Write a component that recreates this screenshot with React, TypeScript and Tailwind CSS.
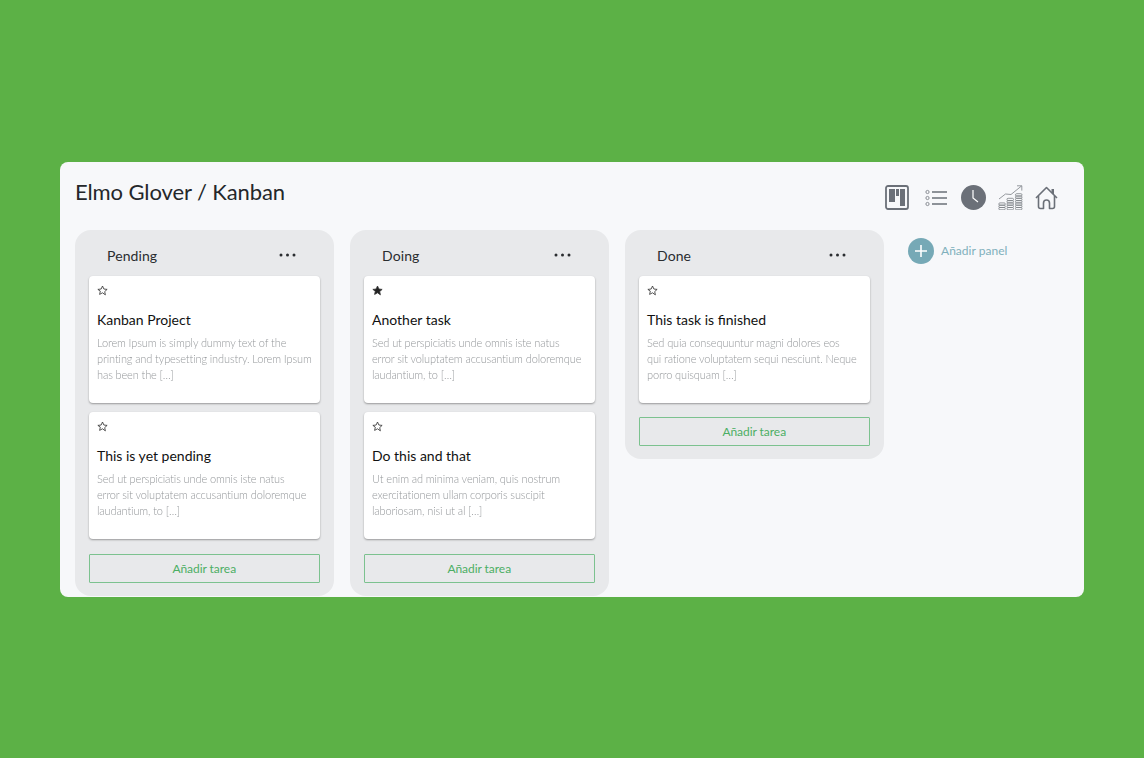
const FONT = "font-['Lato',sans-serif]";

function Star({ filled }: { filled?: boolean }) {
  return (
    <svg width="11" height="11" viewBox="0 0 24 24" fill={filled ? "#222" : "none"} stroke="#333" strokeWidth="1.800" strokeLinejoin="round">
      <path d="M12 2.200l3 6.600 7.100.8-5.300 4.800 1.500 7.100L12 17l-6.300 3.500 1.500-7.100L1.900 9.600l7.100-.8z" />
    </svg>
  );
}

function Card({ title, lines, filled }: { title: string; lines: string[]; filled?: boolean }) {
  return (
    <div className="h-[127px] rounded-[4px] bg-white px-2 pt-[9px] shadow-[0_1px_2px_rgba(0,0,0,0.35)]">
      <div className="h-[12px]"><Star filled={filled} /></div>
      <h3 className="mt-[13px] text-[14px] leading-[20px] text-[#111]">{title}</h3>
      <div className="mt-[5px] text-[11px] font-light leading-[16px] tracking-[-0.12px] text-[#95989b] [will-change:transform]">
        {lines.map((l) => (
          <div key={l} className="whitespace-nowrap">{l}</div>
        ))}
      </div>
    </div>
  );
}

function AddTask() {
  return (
    <button className="flex h-[29px] w-full items-center justify-center rounded-[1px] border border-[#7cc28f] text-[12px] tracking-[-0.05px] text-[#4cae64]">
      Añadir tarea
    </button>
  );
}

function Column({ name, cards }: { name: string; cards: { title: string; lines: string[]; filled?: boolean }[] }) {
  return (
    <section className="w-[259px] self-start rounded-[16px] bg-[#e8e9eb] pb-[13px] pl-[14px] pr-[14.5px]">
      <header className="flex h-[46px] items-center justify-between pb-[1px] pl-[18px] pr-[24px] pt-[5px]">
        <span className="text-[14px] tracking-[0.1px] text-[#2a2d30]">{name}</span>
        <svg width="17" height="4" viewBox="0 0 17 4" fill="#2a2d30">
          <circle cx="2" cy="2" r="1.500" />
          <circle cx="8.500" cy="2" r="1.500" />
          <circle cx="15" cy="2" r="1.500" />
        </svg>
      </header>
      <div className="flex flex-col gap-[9px]">
        {cards.map((c) => (
          <Card key={c.title} {...c} />
        ))}
      </div>
      <div className={cards.length === 1 ? "mt-[14px]" : "mt-[15px]"}><AddTask /></div>
    </section>
  );
}

function Coins({ x, top }: { x: number; top: number }) {
  const ys: number[] = [];
  for (let y = 22.500; y >= top; y -= 2.300) ys.push(y);
  return (
    <g>
      {ys.map((y) => (
        <rect key={y} x={x} y={y} width="6.500" height="2.300" rx="1.100" />
      ))}
    </g>
  );
}

function Icons() {
  return (
    <div className="flex items-center">
      <svg width="24" height="25" viewBox="0 0 24 25">
        <rect x="1" y="1" width="22" height="23" rx="2" fill="none" stroke="#6b7078" strokeWidth="1.800" />
        <rect x="4" y="4" width="6" height="13" fill="#6b7078" />
        <rect x="11" y="4" width="3" height="7" fill="#6b7078" />
        <rect x="15" y="4" width="5" height="17" fill="#6b7078" />
      </svg>
      <svg className="ml-[16px]" width="22" height="18" viewBox="0 0 22 18" fill="none" stroke="#8a8e94">
        <circle cx="2.500" cy="3" r="1.600" />
        <circle cx="2.500" cy="9" r="1.600" />
        <circle cx="2.500" cy="15" r="1.600" />
        <path d="M7 3h15M7 9h15M7 15h15" stroke="#6b7078" strokeWidth="1.300" />
      </svg>
      <svg className="ml-[14px]" width="25" height="25" viewBox="0 0 25 25">
        <circle cx="12.500" cy="12.500" r="12.500" fill="#6b7078" />
        <path d="M12 5v8l5 4" fill="none" stroke="#fff" strokeWidth="1.200" />
      </svg>
      <svg className="ml-[12px]" width="25" height="25" viewBox="0 0 25 25" fill="none" stroke="#7c8187" strokeWidth="0.800">
        <path d="M1 14 L7.500 9 L13 9.500 L23.500 1" />
        <path d="M19 .8h4.800v4.800" />
        <Coins x={0.800} top={16} />
        <Coins x={9} top={13} />
        <Coins x={17.500} top={8} />
      </svg>
      <svg className="ml-[12px]" width="23" height="24" viewBox="0 0 23 24" fill="none" stroke="#6b7078" strokeWidth="1.600" strokeLinejoin="round">
        <path d="M1 12 L11.500 1.500 L22 12" />
        <path d="M3.500 10 V20.500 Q3.500 22.500 5.500 22.500 H8.500 V17 Q8.500 14 11.500 14 Q14.500 14 14.500 17 V22.500 H17.500 Q19.500 22.500 19.500 20.500 V10" />
        <path d="M16.500 3h2.500v6l-2.500-2.500z" fill="#6b7078" stroke="none" />
      </svg>
    </div>
  );
}

export default function App() {
  return (
    <div className={`${FONT} flex h-[758px] w-[1144px] items-start justify-center bg-[#5cb146] pt-[162px]`}>
      <main className="h-[435px] w-[1024px] rounded-[8px] bg-[#f7f8fa] pl-[15px] pr-[26px]">
        <div className="flex h-[68px] items-start justify-between">
          <h1 className="mt-[15px] text-[22px] leading-[30px] tracking-[-0.1px] text-[#24272a]">Elmo Glover / Kanban</h1>
          <div className="mt-[23px]"><Icons /></div>
        </div>
        <div className="flex gap-[16px]">
          <Column
            name="Pending"
            cards={[
              { title: "Kanban Project", lines: ["Lorem Ipsum is simply dummy text of the", "printing and typesetting industry. Lorem Ipsum", "has been the […]"] },
              { title: "This is yet pending", lines: ["Sed ut perspiciatis unde omnis iste natus", "error sit voluptatem accusantium doloremque", "laudantium, to […]"] },
            ]}
          />
          <Column
            name="Doing"
            cards={[
              { title: "Another task", filled: true, lines: ["Sed ut perspiciatis unde omnis iste natus", "error sit voluptatem accusantium doloremque", "laudantium, to […]"] },
              { title: "Do this and that", lines: ["Ut enim ad minima veniam, quis nostrum", "exercitationem ullam corporis suscipit", "laboriosam, nisi ut al […]"] },
            ]}
          />
          <Column
            name="Done"
            cards={[
              { title: "This task is finished", lines: ["Sed quia consequuntur magni dolores eos", "qui ratione voluptatem sequi nesciunt. Neque", "porro quisquam […]"] },
            ]}
          />
          <div className="ml-[8px] mt-[8px] flex h-[26px] items-center gap-[7px]">
            <span className="flex h-[26px] w-[26px] items-center justify-center rounded-full bg-[#76a9b6]">
              <svg width="14" height="14" viewBox="0 0 14 14" stroke="#fff" strokeWidth="1.600"><path d="M7 1v12M1 7h12" /></svg>
            </span>
            <span className="text-[12px] tracking-[0.03px] text-[#7fb0bc]">Añadir panel</span>
          </div>
        </div>
      </main>
    </div>
  );
}
